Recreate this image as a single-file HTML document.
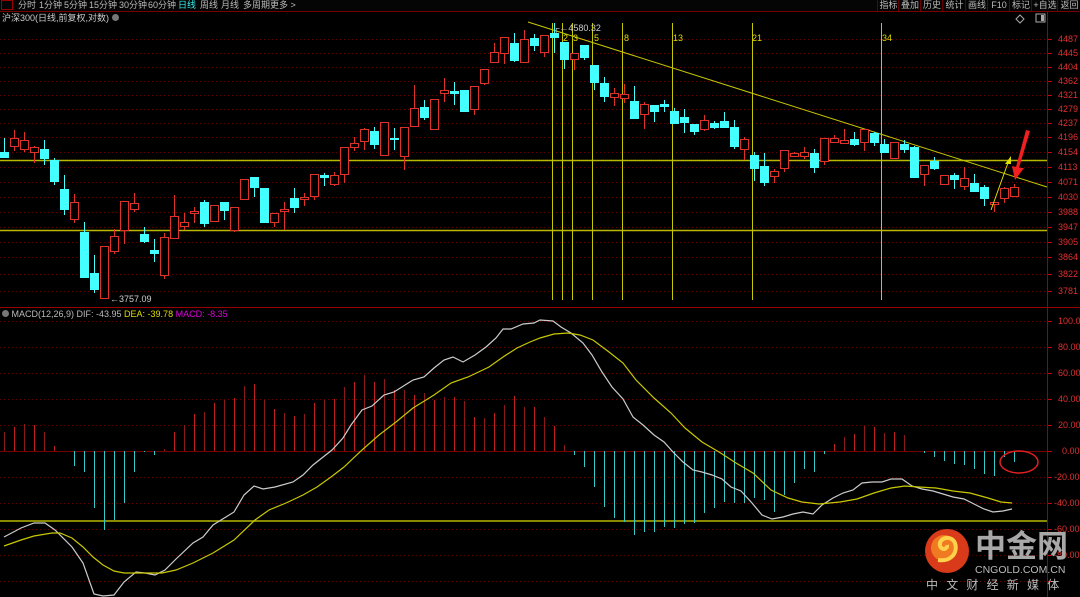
<!DOCTYPE html>
<html><head><meta charset="utf-8">
<style>
html,body{margin:0;padding:0;background:#000;width:1080px;height:597px;overflow:hidden;font-family:"Liberation Sans","Noto Sans CJK SC",sans-serif;}
#top{position:absolute;left:0;top:0;width:1080px;height:11px;border-bottom:1px solid #700;background:#050505;font-size:9px;color:#bbb;line-height:11px;}
#top span{position:absolute;top:0;white-space:nowrap}
.btn{border-left:1px solid #600;text-align:center;height:11px}
.t{position:absolute;font-size:9px;white-space:nowrap;line-height:10px}
.pl{position:absolute;left:1058px;font-size:9px;color:#e03030;line-height:10px}
</style></head><body>
<div id="top">
<span style="left:1px;top:0;width:12px;height:10px;border:1px solid #900;box-sizing:border-box"></span>
<span style="left:18px">分时</span><span style="left:39px">1分钟</span><span style="left:64px">5分钟</span><span style="left:89px">15分钟</span><span style="left:119px">30分钟</span><span style="left:148px">60分钟</span><span style="left:178px;color:#3ee">日线</span><span style="left:200px">周线</span><span style="left:221px">月线</span><span style="left:243px">多周期</span><span style="left:270px">更多 &gt;</span>
<span class="btn" style="left:877px;width:21px">指标</span><span class="btn" style="left:898px;width:22px">叠加</span><span class="btn" style="left:920px;width:22px">历史</span><span class="btn" style="left:942px;width:23px">统计</span><span class="btn" style="left:965px;width:22px">画线</span><span class="btn" style="left:987px;width:22px">F10</span><span class="btn" style="left:1009px;width:22px">标记</span><span class="btn" style="left:1031px;width:26px">+自选</span><span class="btn" style="left:1057px;width:23px">返回</span>
</div>
<div class="t" style="left:2px;top:13px;color:#ccc">沪深300(日线,前复权,对数) <span style="display:inline-block;width:7px;height:7px;border-radius:4px;background:#777"></span></div>
<svg width="1080" height="597" style="position:absolute;left:0;top:0" id="s"></svg>
<div class="pl" style="top:34px">4487</div><div class="pl" style="top:48px">4445</div><div class="pl" style="top:62px">4404</div><div class="pl" style="top:76px">4362</div><div class="pl" style="top:90px">4321</div><div class="pl" style="top:104px">4279</div><div class="pl" style="top:118px">4237</div><div class="pl" style="top:132px">4196</div><div class="pl" style="top:147px">4154</div><div class="pl" style="top:162px">4113</div><div class="pl" style="top:177px">4071</div><div class="pl" style="top:192px">4030</div><div class="pl" style="top:207px">3988</div><div class="pl" style="top:222px">3947</div><div class="pl" style="top:237px">3905</div><div class="pl" style="top:252px">3864</div><div class="pl" style="top:269px">3822</div><div class="pl" style="top:286px">3781</div>
<div class="pl" style="top:316px">100.0</div><div class="pl" style="top:342px">80.00</div><div class="pl" style="top:368px">60.00</div><div class="pl" style="top:394px">40.00</div><div class="pl" style="top:420px">20.00</div><div class="pl" style="top:446px;left:1062px">0.00</div><div class="pl" style="top:472px;left:1054px">-20.00</div><div class="pl" style="top:498px;left:1054px">-40.00</div><div class="pl" style="top:524px;left:1054px">-60.00</div><div class="pl" style="top:550px;left:1054px">-80.00</div>
<div class="t" style="left:110px;top:294px;color:#ccc">←3757.09</div>
<div class="t" style="left:553px;top:23px;color:#ccc">┌←4580.32</div>
<div class="t" style="left:563px;top:33px;color:#dd0">2</div><div class="t" style="left:573px;top:33px;color:#dd0">3</div><div class="t" style="left:594px;top:33px;color:#dd0">5</div><div class="t" style="left:624px;top:33px;color:#dd0">8</div><div class="t" style="left:673px;top:33px;color:#dd0">13</div><div class="t" style="left:752px;top:33px;color:#dd0">21</div><div class="t" style="left:882px;top:33px;color:#dd0">34</div>
<div class="t" style="left:2px;top:309px;color:#bbb"><span style="display:inline-block;width:7px;height:7px;border-radius:4px;background:#777"></span> MACD(12,26,9) DIF: -43.95 <span style="color:#dd0">DEA: -39.78</span> <span style="color:#d0d">MACD: -8.35</span></div>
<svg width="1080" height="597" style="position:absolute;left:0;top:0" id="s2"></svg>
<div class="t" style="left:975px;top:529px;font-size:31px;line-height:36px;font-weight:bold;color:#a8a8a8">中金网</div>
<div class="t" style="left:975px;top:565px;font-size:10.5px;color:#bbb">CNGOLD.COM.CN</div>
<div class="t" style="left:926px;top:578px;font-size:12px;line-height:14px;color:#bbb;letter-spacing:8.2px">中文财经新媒体</div>
<script>
var s=document.getElementById('s'),h='';
function L(x1,y1,x2,y2,c,w,d){h+='<line x1="'+x1+'" y1="'+y1+'" x2="'+x2+'" y2="'+y2+'" stroke="'+c+'" stroke-width="'+(w||1)+'"'+(d?' stroke-dasharray="'+d+'"':'')+'/>';}
[39,53,67,81,95,109,123,137,152,167,182,197,212,227,242,257,274,291].forEach(function(y){L(0,y+.5,1047,y+.5,'#600','1','1 3');L(1047,y+.5,1052,y+.5,'#c00');});
[321,347,373,399,425,477,503,529,555,581].forEach(function(y){L(0,y+.5,1047,y+.5,'#600','1','1 3');L(1047,y+.5,1052,y+.5,'#c00');});
L(0,451.5,1047,451.5,'#700');L(1047,451.5,1052,451.5,'#c00');
L(1047.5,12,1047.5,597,'#900');L(0,307.5,1080,307.5,'#900');
L(0,160.5,1047,160.5,'#b8b800',1.5);L(0,230.5,1047,230.5,'#b8b800',1.5);L(0,521,1047,521,'#b8b800',1.5);
[552,562,572,592,622,672,752,881].forEach(function(x){L(x+.5,23,x+.5,300,'#c8c800');});
L(528,22,1047,187,'#c8c800');
var C=[['c',152,157,138,157],['r',138,146,130,151],['r',140,149,132,152],['r',147,152,146,163],['c',149,158,140,165],['c',160,181,158,185],['c',189,209,175,215],['r',202,219,194,223],['c',232,277,222,277],['c',273,289,255,293],['r',246,298,246,298],['r',236,251,229,254],['r',201,230,201,244],['r',203,209,193,212],['c',234,241,227,243],['c',250,253,239,262],['r',237,275,233,279],['r',216,238,195,238],['r',222,226,213,230],['r',211,213,207,223],['c',202,223,200,227],['r',205,221,205,221],['c',202,210,202,220],['r',207,230,207,232],['r',179,199,179,199],['c',177,187,177,197],['c',188,222,188,223],['r',213,222,213,227],['r',209,211,202,230],['c',198,207,188,213],['r',197,199,193,206],['r',174,196,174,200],['c',175,177,173,186],['r',175,184,172,186],['r',147,174,147,183],['r',143,147,137,151],['r',129,141,128,150],['c',131,144,127,149],['r',122,155,122,155],['c',138,139,128,150],['r',127,156,127,170],['r',108,126,85,126],['c',107,117,100,120],['r',99,129,99,129],['r',90,93,78,102],['c',91,93,82,105],['c',90,111,90,112],['r',86,109,86,115],['r',69,83,69,85],['r',52,62,43,62],['r',37,53,37,64],['c',43,60,33,62],['r',39,62,30,62],['c',38,45,34,51],['r',35,52,35,57],['c',33,37,23,53],['c',42,59,42,69],['r',53,59,53,70],['c',45,57,45,60],['c',65,82,65,90],['c',83,96,77,102],['r',93,97,88,106],['r',94,98,84,103],['c',101,118,86,118],['r',104,114,102,129],['c',105,111,105,122],['c',104,106,100,112],['c',111,123,108,123],['c',117,122,109,133],['c',124,131,124,135],['r',120,129,115,131],['c',123,127,121,129],['c',121,127,112,127],['c',127,146,120,149],['r',139,149,137,160],['c',155,168,152,181],['c',166,182,153,186],['r',171,176,169,183],['r',150,168,150,172],['r',153,156,152,157],['r',152,156,147,159],['c',153,167,149,173],['r',138,161,138,165],['r',138,142,135,143],['r',140,143,129,143],['c',139,144,132,146],['r',129,142,129,151],['c',133,142,132,146],['c',144,152,139,153],['r',142,158,142,158],['c',144,149,140,153],['c',147,177,146,177],['r',165,174,165,186],['c',161,168,157,170],['r',175,184,175,184],['c',175,179,173,189],['r',178,186,167,190],['c',183,191,174,192],['c',187,198,185,206],['r',202,204,202,212],['r',188,198,187,203],['r',187,196,184,197]];
C.forEach(function(c,i){var x=4+10*i,col=c[0]=='r'?'#e0302a':'#4ff';L(x+.5,c[3],x+.5,c[4],col);
var bh=Math.max(c[2]-c[1],1);
if(c[0]=='r')h+='<rect x="'+(x-3.5)+'" y="'+(c[1]+.5)+'" width="8" height="'+bh+'" fill="#000" stroke="'+col+'"/>';
else h+='<rect x="'+(x-4)+'" y="'+c[1]+'" width="9" height="'+(bh+1)+'" fill="'+col+'"/>';});
var M=[19,24,27,26,19,5,0,-15,-21,-57,-79,-69,-52,-21,-1,-4,2,19,26,37,39,48,51,53,65,67,51,42,38,35,37,48,51,52,64,69,76,69,72,61,61,56,58,51,54,54,50,34,33,38,46,55,44,44,34,25,6,-4,-16,-36,-56,-67,-71,-84,-81,-81,-76,-77,-73,-72,-62,-57,-51,-52,-52,-47,-49,-61,-44,-32,-18,-21,-3,7,14,17,25,24,18,19,16,0,-2,-6,-10,-13,-14,-18,-23,-25,-6,-11];
M.forEach(function(v,i){if(!v)return;var x=4+10*i+.5;L(x,451,x,451-v,v>0?(i%2?'#c02020':'#8a1a1a'):'#3cc');});
function P(pts,c){h+='<polyline fill="none" stroke="'+c+'" stroke-width="1.2" points="'+pts+'"/>';}
P('4,537 21,528 34,523 45,523 55,530 72,547 83,563 94,594 103,596 114,595 124,582 136,572 145,573 155,575 165,570 176,559 193,543 203,537 213,525 234,512 244,495 254,486 263,489 275,487 293,482 303,475 313,465 332,450 343,438 351,425 362,410 372,406 384,395 394,392 413,380 424,377 434,368 444,360 453,357 463,362 475,355 486,347 496,338 503,329 511,329 523,324 534,323 540,320 553,321 561,327 571,333 583,343 592,355 602,372 612,387 623,399 633,417 643,425 654,435 664,442 673,452 683,462 693,470 702,472 712,475 722,479 731,487 741,491 752,503 762,515 772,519 783,517 793,514 803,512 813,514 822,505 833,498 843,493 853,490 862,483 872,482 882,482 891,479 902,479 912,486 922,489 933,491 943,494 953,497 964,499 974,504 984,509 993,512 1003,511 1012,509','#ccc');
P('4,546 21,540 34,536 52,533 60,533 72,538 83,547 93,557 103,565 114,571 124,573 145,573 162,573 176,570 193,563 213,553 234,540 255,520 269,510 286,503 303,495 317,487 331,477 344,467 362,450 379,435 396,422 413,408 434,395 451,383 468,377 489,367 503,357 517,348 530,342 540,338 554,334 568,333 580,335 593,340 609,352 623,363 636,380 654,398 671,413 685,428 702,442 719,452 736,463 753,473 771,490 788,498 802,502 819,504 840,502 857,499 874,493 891,488 905,486 919,487 936,488 953,491 970,493 988,498 1001,502 1012,503','#c8c800');
h+='<ellipse cx="1019" cy="462" rx="19" ry="11" fill="none" stroke="#e02020" stroke-width="1.5"/>';
L(991,210,1009,160,'#dd0');h+='<polygon points="1011,156 1005,164 1011,164" fill="#dd0"/>';
h+='<polygon points="1026,130 1030,131 1019,168 1024,168 1015,180 1012,166 1016,167" fill="#f02020"/>';
h+='<polygon points="1002,7 1006,3 1010,7 1006,11" fill="none" stroke="#aaa" transform="translate(14,12)"/>';
h+='<rect x="1036" y="14" width="9" height="8" fill="none" stroke="#aaa"/><rect x="1041" y="15" width="3" height="6" fill="#aaa"/>';
s.innerHTML=h;
document.getElementById('s2').innerHTML='<circle cx="947" cy="551" r="22" fill="#d83a1a"/><circle cx="944" cy="548" r="13" fill="#f07a22"/><path d="M938,560 C952,562 958,552 955,543 C951,534 938,538 940,546 C942,551 948,549 947,545" fill="none" stroke="#ffd04a" stroke-width="4"/>';
</script>
</body></html>
